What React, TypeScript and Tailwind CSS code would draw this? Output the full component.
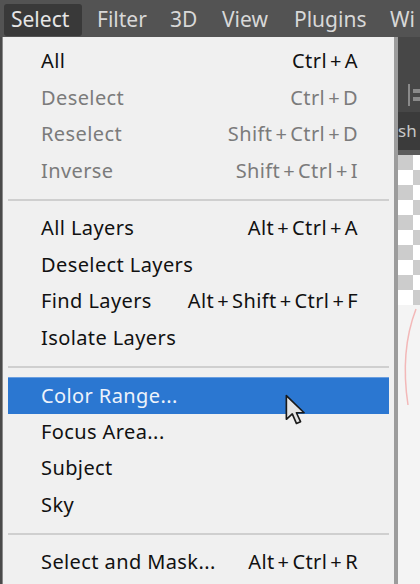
import React from 'react';

type Item = { label: string; shortcut?: string; disabled?: boolean; active?: boolean } | 'sep';

const items: Item[] = [
  { label: 'All', shortcut: 'Ctrl+A' },
  { label: 'Deselect', shortcut: 'Ctrl+D', disabled: true },
  { label: 'Reselect', shortcut: 'Shift+Ctrl+D', disabled: true },
  { label: 'Inverse', shortcut: 'Shift+Ctrl+I', disabled: true },
  'sep',
  { label: 'All Layers', shortcut: 'Alt+Ctrl+A' },
  { label: 'Deselect Layers' },
  { label: 'Find Layers', shortcut: 'Alt+Shift+Ctrl+F' },
  { label: 'Isolate Layers' },
  'sep',
  { label: 'Color Range...', active: true },
  { label: 'Focus Area...' },
  { label: 'Subject' },
  { label: 'Sky' },
  'sep',
  { label: 'Select and Mask...', shortcut: 'Alt+Ctrl+R' },
];

const topMenus = [
  { label: 'Filter', w: 'w-[73px]' },
  { label: '3D', w: 'w-[52px]' },
  { label: 'View', w: 'w-[72px]' },
  { label: 'Plugins', w: 'w-[96px]' },
  { label: 'Wi', w: 'w-[40px]' },
];

// mouse pointer sitting over the highlighted row
const Cursor = () => (
  <svg width="26" height="36" viewBox="0 0 22 30" className="absolute left-[276px] top-[15px] z-10">
    <path
      d="M2 2 L2 22 L7 17.5 L10.5 25.5 L14 24 L10.5 16.5 L17 16.5 Z"
      fill="#e4e4e4"
      stroke="#1a1a1a"
      strokeWidth="1.4"
      strokeLinejoin="round"
    />
  </svg>
);

const Shortcut = ({ text }: { text: string }) => {
  const parts = text.split('+');
  return (
    <span className="flex items-center">
      {parts.map((p, i) => (
        <React.Fragment key={i}>
          {i > 0 && <span className="px-[3px]">+</span>}
          <span>{p}</span>
        </React.Fragment>
      ))}
    </span>
  );
};

const Checker = () => {
  const cells = [];
  for (let r = 0; r < 10; r++) {
    for (let c = 0; c < 2; c++) {
      cells.push(
        <div key={`${r}-${c}`} className={(r + c) % 2 === 0 ? 'bg-[#cccccc]' : 'bg-white'} />
      );
    }
  }
  return <div className="grid grid-cols-[15px_15px] grid-rows-[repeat(10,15px)] h-[150px] overflow-hidden">{cells}</div>;
};

export default function App() {
  return (
    <div
      className="w-[420px] h-[584px] overflow-hidden bg-[#535353] flex flex-col"
      style={{ fontFamily: '"Noto Sans", "Open Sans", sans-serif' }}
    >
      {/* menu bar */}
      <div className="h-[37px] flex items-start shrink-0 text-[21px] text-[#d8d8d8]">
        <div className="ml-[4px] mt-[4px] h-[32px] w-[78px] shrink-0 rounded-[3px] bg-[#393939] flex items-center pl-[7px] text-[#e6e6e6]">
          Select
        </div>
        <div className="flex items-center h-[40px] ml-[15px] whitespace-nowrap">
          {topMenus.map((m) => (
            <span key={m.label} className={`${m.w} shrink-0`}>
              {m.label}
            </span>
          ))}
        </div>
      </div>

      <div className="flex flex-1 min-h-0">
        {/* left sliver */}
        <div className="w-[3px] shrink-0 bg-[#4a4a4a] border-r border-[#8a8a8a]" />

        {/* dropdown */}
        <div className="w-[391px] shrink-0 bg-[#f0f0f0] pt-[6px] px-[5px] flex flex-col text-[20px] tracking-[0.4px]">
          {items.map((it, i) =>
            it === 'sep' ? (
              <div key={i} className="h-[21px] shrink-0 flex items-center">
                <div className="h-[2px] w-full bg-[#cfcfcf]" />
              </div>
            ) : (
              <div
                key={i}
                className={`relative h-[36.5px] shrink-0 flex items-center justify-between pl-[33px] pr-[31px] whitespace-nowrap ${
                  it.active ? 'bg-[#2b77d1] text-[#eef3fb] border-t border-[#6a9fe0]' : ''
                } ${it.disabled ? 'text-[#7b7b7b]' : it.active ? '' : 'text-[#111111]'}`}
              >
                <span>{it.label}</span>
                {it.shortcut && <Shortcut text={it.shortcut} />}
                {it.active && <Cursor />}
              </div>
            )
          )}
        </div>

        {/* shadow edge */}
        <div className="w-[4px] shrink-0 bg-[#9c9c9c]" />

        {/* right-hand workspace */}
        <div className="flex-1 min-w-0 flex flex-col overflow-hidden">
          <div className="h-[75px] bg-[#474747] flex items-end pb-[6px] pl-[10px]">
            <div className="flex gap-[3px] items-center">
              <div className="w-[2px] h-[22px] bg-[#8a8a8a]" />
              <div className="flex flex-col gap-[4px]">
                <div className="w-[10px] h-[4px] bg-[#8a8a8a]" />
                <div className="w-[10px] h-[4px] bg-[#8a8a8a]" />
              </div>
            </div>
          </div>
          <div className="h-[38px] bg-[#3b3b3b] flex items-center text-[17px] text-[#c8c8c8]">sh</div>
          <div className="h-[5px] bg-[#5c5c5c]" />
          <Checker />
          <div className="flex-1 bg-[#f4f4f4] relative overflow-hidden">
            <svg width="30" height="120" className="absolute left-0 top-0">
              <path d="M18 4 C8 30 4 60 10 100" stroke="#f3b8b8" strokeWidth="1.5" fill="none" />
            </svg>
          </div>
        </div>
      </div>
    </div>
  );
}
